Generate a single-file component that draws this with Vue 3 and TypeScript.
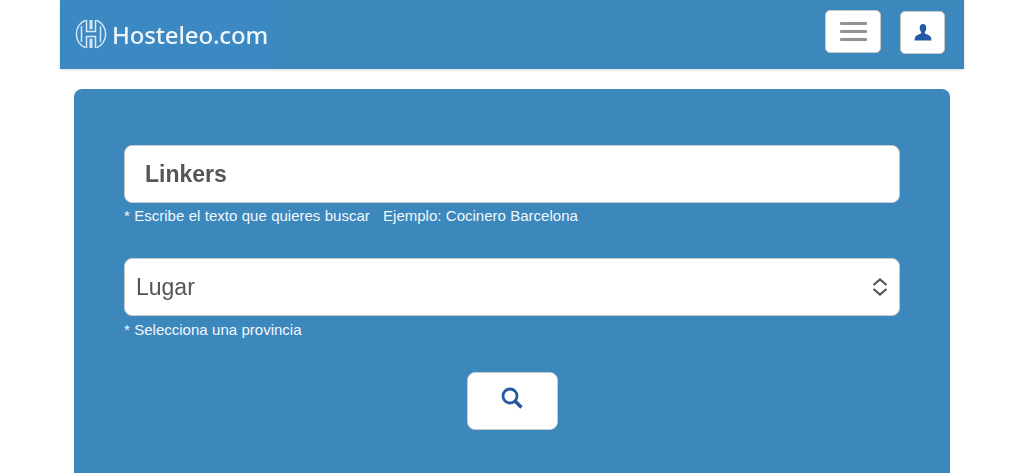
<script setup lang="ts">
const searchText = 'Linkers'
const placeLabel = 'Lugar'
</script>

<template>
  <div class="page">
    <header class="topbar">
      <a class="logo">
        <svg class="logo-mark" viewBox="0 0 32 32" fill="none" stroke="#d6e9f5" stroke-width="1.500">
          <path d="M10.500 2.200A15 15 0 0 0 10.500 29.800" />
          <path d="M21.500 2.200A15 15 0 0 1 21.500 29.800" />
          <path d="M6.500 8V24" />
          <path d="M25.500 8V24" />
          <path d="M11.500 2V13.500H20.500V2" />
          <path d="M15.200 2V10.500H16.800V2" />
          <path d="M11.500 30V18.500H20.500V30" />
          <path d="M15.200 30V21.500H16.800V30" />
        </svg>
        <span class="logo-text">Hosteleo.com</span>
      </a>
      <div class="topbar-actions">
        <button class="menu-btn" type="button" aria-label="Menu">
          <span></span><span></span><span></span>
        </button>
        <button class="user-btn" type="button" aria-label="Usuario">
          <svg viewBox="0 0 18 17" width="18" height="17" fill="#2459a3">
            <path d="M9 0C6.900 0 5.700 1.600 5.700 3.800c0 1.800.7 3.200 1.500 4.200.3.500.2 1.200-.3 1.600-.9.600-2.600 1-4 1.800C1.500 11.900.7 13 .5 16.500h17c-.2-3.500-1-4.600-2.400-5.100-1.400-.8-3.100-1.200-4-1.800-.5-.4-.6-1.100-.3-1.600.8-1 1.500-2.400 1.500-4.200C12.300 1.600 11.100 0 9 0Z" />
          </svg>
        </button>
      </div>
    </header>

    <main class="search-card">
      <div class="field">
        <div class="text-input"><span class="soft">{{ searchText }}</span></div>
        <p class="hint">* Escribe el texto que quieres buscar &nbsp; Ejemplo: Cocinero Barcelona</p>
      </div>
      <div class="field">
        <div class="select-input">
          <span class="soft">{{ placeLabel }}</span>
          <svg viewBox="0 0 16 18" width="16" height="18" fill="none" stroke="#555" stroke-width="2.200">
            <path d="M1.500 7L8 1.500L14.500 7" />
            <path d="M1.500 11L8 16.500L14.500 11" />
          </svg>
        </div>
        <p class="hint">* Selecciona una provincia</p>
      </div>
      <button class="search-btn" type="button" aria-label="Buscar">
        <svg viewBox="0 0 22 22" width="22" height="22" fill="none" stroke="#2459a3">
          <circle cx="9" cy="9" r="7" stroke-width="2.800" />
          <path d="M14 14L20.500 20.500" stroke-width="3.600" />
        </svg>
      </button>
    </main>
  </div>
</template>

<style>
html,
body {
  margin: 0;
  background: #fff;
  overflow: hidden;
}
</style>

<style scoped>
.page {
  width: 1024px;
  height: 473px;
  overflow: hidden;
  font-family: "Liberation Sans", Arial, sans-serif;
}

.topbar {
  margin: 0 60px;
  height: 69px;
  background: #3c87bc;
  box-shadow: 0 1px 3px rgba(0, 0, 0, 0.14);
  display: flex;
  justify-content: space-between;
}

.logo {
  width: 213px;
  background: #3c88c2;
  display: flex;
  align-items: center;
  padding-left: 15px;
  padding-bottom: 1px;
  box-sizing: border-box;
  gap: 5px;
}

.logo-mark {
  width: 32px;
  height: 32px;
  flex: none;
  filter: blur(0.4px);
}

.logo-text {
  font-family: "Noto Sans", "Open Sans", sans-serif;
  font-size: 24px;
  font-weight: 500;
  color: #eef6fb;
  letter-spacing: -0.15px;
  filter: blur(0.4px);
}

.soft {
  filter: blur(0.25px);
}

.topbar-actions {
  display: flex;
  gap: 19px;
  padding-top: 10px;
  padding-right: 19px;
}

.menu-btn,
.user-btn,
.search-btn {
  background: #fff;
  border: 1px solid #c4c9cd;
  border-radius: 5px;
  padding: 0;
  display: flex;
  align-items: center;
  justify-content: center;
}

.menu-btn {
  width: 56px;
  height: 43px;
  flex-direction: column;
  gap: 5px;
}

.menu-btn span {
  width: 27px;
  height: 3px;
  background: #929292;
  border-radius: 1px;
}

.user-btn {
  width: 45px;
  height: 43px;
  margin-top: 1px;
}

.search-card {
  margin: 20px 74px 0;
  height: 420px;
  background: #3c87bc;
  border-radius: 8px;
  padding: 56px 50px 0;
  box-sizing: border-box;
  display: flex;
  flex-direction: column;
}

.field {
  margin-bottom: 35px;
}

.field:first-child {
  margin-bottom: 34px;
}

.text-input,
.select-input {
  height: 58px;
  box-sizing: border-box;
  background: #fff;
  border: 1px solid #c4c9cd;
  border-radius: 8px;
  color: #555;
  display: flex;
  align-items: center;
}

.text-input {
  padding-left: 20px;
  font-size: 23px;
  font-weight: 700;
}

.select-input {
  padding: 0 11px 0 11px;
  font-size: 23px;
  justify-content: space-between;
}

.hint {
  margin: 4px 0 0;
  font-size: 15px;
  line-height: 17px;
  word-spacing: 0.25px;
  color: #f2f8fc;
}

.select-input + .hint {
  margin-top: 5px;
}

.search-btn {
  width: 91px;
  height: 58px;
  align-self: center;
  border-radius: 8px;
  margin-top: -1px;
  padding-bottom: 7px;
}
</style>
